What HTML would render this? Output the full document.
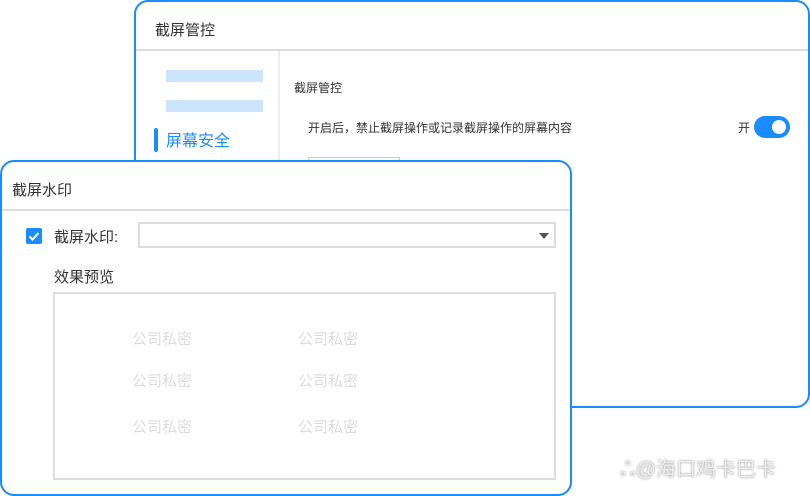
<!DOCTYPE html>
<html><head><meta charset="utf-8"><style>
*{margin:0;padding:0;box-sizing:border-box}
body{width:810px;height:496px;background:#fff;position:relative;overflow:hidden;font-family:"Liberation Sans","Noto Sans CJK SC",sans-serif;color:#333}
.a{position:absolute}
.panel{position:absolute;background:#fff;border:2px solid #1a8cff;border-radius:14px}
.wm{position:absolute;font-size:15px;color:#ddd}
</style></head><body>
<div class="panel" style="left:134px;top:0;width:676px;height:408px">
  <div class="a" style="left:19px;top:17px;font-size:15px;color:#333">截屏管控</div>
  <div class="a" style="left:0;top:47px;width:672px;height:2px;background:#ddd"></div>
  <div class="a" style="left:142px;top:49px;width:2px;height:360px;background:#eee"></div>
  <div class="a" style="left:30px;top:68px;width:97px;height:12px;background:#cce5fd"></div>
  <div class="a" style="left:30px;top:98px;width:97px;height:12px;background:#cce5fd"></div>
  <div class="a" style="left:18px;top:126px;width:4px;height:24px;background:#1a8cff;border-radius:2px"></div>
  <div class="a" style="left:30px;top:125px;font-size:16px;color:#1a8cff">屏幕安全</div>
  <div class="a" style="left:158px;top:77px;font-size:12px;color:#333">截屏管控</div>
  <div class="a" style="left:172px;top:117px;font-size:12px;color:#333">开启后，禁止截屏操作或记录截屏操作的屏幕内容</div>
  <div class="a" style="left:602px;top:117px;font-size:12px;color:#333">开</div>
  <div class="a" style="left:618px;top:114px;width:36px;height:22px;border-radius:11px;background:#1a8cff"></div>
  <div class="a" style="left:636px;top:118px;width:14px;height:14px;border-radius:7px;background:#fff"></div>
  <div class="a" style="left:172px;top:155px;width:92px;height:10px;border:1px solid #ccc"></div>
</div>
<div class="panel" style="left:0;top:160px;width:572px;height:336px">
  <div class="a" style="left:10px;top:17px;font-size:15px;color:#333">截屏水印</div>
  <div class="a" style="left:0;top:47px;width:568px;height:2px;background:#ddd"></div>
  <div class="a" style="left:24px;top:66px;width:16px;height:16px;background:#1a8cff;border-radius:2px"></div>
  <svg class="a" style="left:24px;top:66px" width="16" height="16"><path d="M3.5 8.5l3 3 6-6.5" stroke="#fff" stroke-width="2" fill="none"/></svg>
  <div class="a" style="left:52px;top:64px;font-size:15px;color:#333">截屏水印:</div>
  <div class="a" style="left:136px;top:60px;width:418px;height:26px;border:2px solid #ddd"></div>
  <div class="a" style="left:537px;top:71px;width:0;height:0;border-left:5px solid transparent;border-right:5px solid transparent;border-top:6px solid #555"></div>
  <div class="a" style="left:52px;top:104px;font-size:15px;color:#333">效果预览</div>
  <div class="a" style="left:51px;top:130px;width:503px;height:188px;border:2px solid #ddd"></div>
  <div class="wm" style="left:130px;top:166px">公司私密</div>
  <div class="wm" style="left:296px;top:166px">公司私密</div>
  <div class="wm" style="left:130px;top:208px">公司私密</div>
  <div class="wm" style="left:296px;top:208px">公司私密</div>
  <div class="wm" style="left:130px;top:254px">公司私密</div>
  <div class="wm" style="left:296px;top:254px">公司私密</div>
</div>
<div class="a" style="left:620px;top:453px;font-size:20px;color:#eee;text-shadow:0 0 2px #888">ஃ@海口鸡卡巴卡</div>
</body></html>
